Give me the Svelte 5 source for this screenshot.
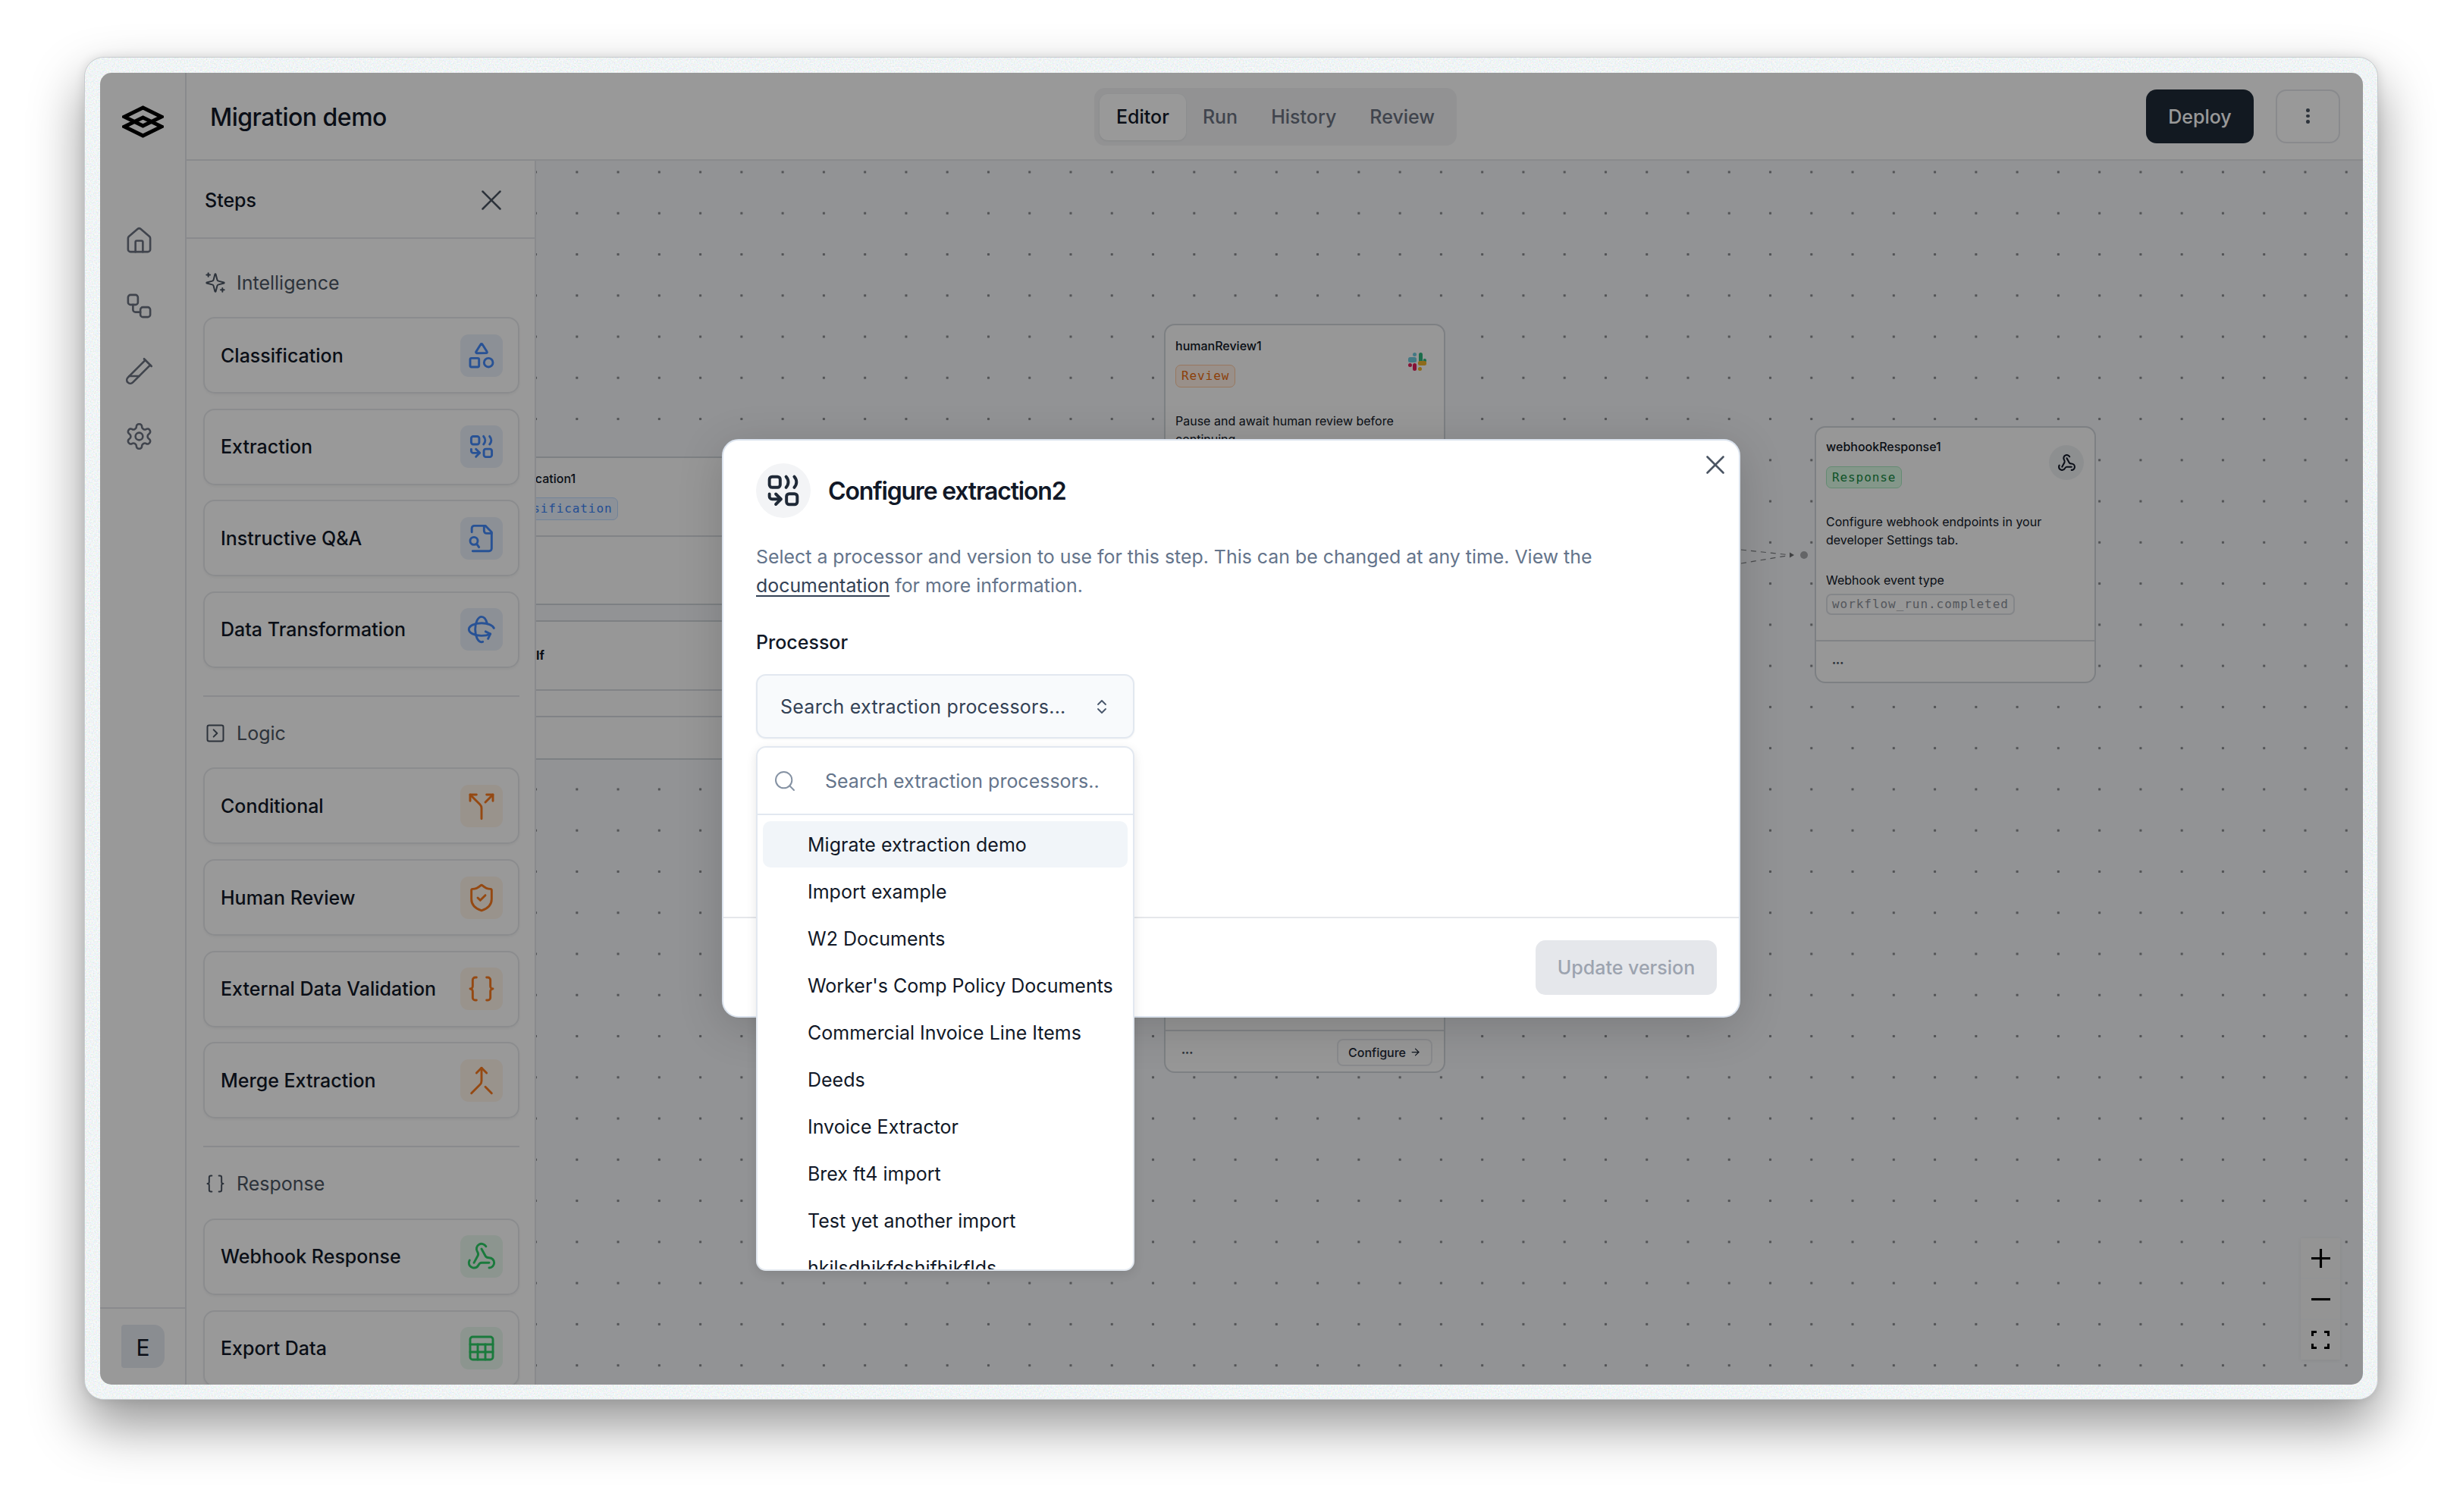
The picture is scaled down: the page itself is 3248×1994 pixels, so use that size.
<script>
  const blue = 'blue', orange = 'orange', green = 'green';

  // lucide-style icon bodies, all on a 24 box
  const icons = {
    shapes: `<path d="M8.3 10a.7.7 0 0 1-.626-1.079L11.4 3a.7.7 0 0 1 1.198-.043L16.3 8.9a.7.7 0 0 1-.572 1.1Z"/><rect x="3" y="14" width="7" height="7" rx="1"/><circle cx="17.5" cy="17.5" r="3.5"/>`,
    extract: `<rect x="3.85" y="3.85" width="6.3" height="6.3" rx="1.6"/><path d="M13.6 3.85c.9 1 1.3 2 1.3 3.15s-.4 2.15-1.3 3.15"/><path d="M18.4 3.85c.9 1 1.3 2 1.3 3.15s-.4 2.15-1.3 3.15"/><path d="M3.85 14v1.4a1.6 1.6 0 0 0 1.6 1.6h5"/><path d="m7.6 14 3 3-3 3"/><rect x="13.85" y="13.85" width="6.3" height="6.3" rx="1.6"/>`,
    fileSearch: `<path d="M14 2v4a2 2 0 0 0 2 2h4"/><path d="M4.3 7V4a2 2 0 0 1 2-2H15l5 5v13a2 2 0 0 1-2 2H5"/><circle cx="6" cy="14" r="3"/><path d="m10 19-1.8-2.6"/>`,
    rotate: `<path d="M16.466 7.5C15.643 4.237 13.952 2 12 2 9.239 2 7 6.477 7 12s2.239 10 5 10c.342 0 .677-.069 1-.2"/><path d="m15.194 13.707 3.814 1.86-1.86 3.814"/><path d="M19 15.57c-1.804.885-4.274 1.43-7 1.43-5.523 0-10-2.239-10-5s4.477-5 10-5c4.838 0 8.873 1.718 9.8 4"/>`,
    split: `<path d="M16 3h5v5"/><path d="M8 3H3v5"/><path d="M12 22v-8.3a4 4 0 0 0-1.172-2.872L3 3"/><path d="m15 9 6-6"/>`,
    shield: `<path d="M20 13c0 5-3.5 7.5-7.66 8.95a1 1 0 0 1-.67-.01C7.5 20.5 4 18 4 13V6a1 1 0 0 1 1-1c2 0 4.5-1.2 6.24-2.72a1.17 1.17 0 0 1 1.52 0C14.51 3.81 17 5 19 5a1 1 0 0 1 1 1z"/><path d="m9 12 2 2 4-4"/>`,
    braces: `<path d="M8 3H7a2 2 0 0 0-2 2v5a2 2 0 0 1-2 2 2 2 0 0 1 2 2v5c0 1.1.9 2 2 2h1"/><path d="M16 21h1a2 2 0 0 0 2-2v-5c0-1.1.9-2 2-2a2 2 0 0 1-2-2V5a2 2 0 0 0-2-2h-1"/>`,
    merge: `<path d="m8 6 4-4 4 4"/><path d="M12 2v10.3a4 4 0 0 1-1.172 2.872L4 22"/><path d="m20 22-5-5"/>`,
    webhook: `<path d="M18 16.98h-5.99c-1.1 0-1.95.94-2.48 1.9A4 4 0 0 1 2 17c.01-.7.2-1.4.57-2"/><path d="m6 17 3.13-5.78c.53-.97.1-2.18-.5-3.1a4 4 0 1 1 6.89-4.06"/><path d="m12 6 3.13 5.73C15.66 12.7 16.9 13 18 13a4 4 0 0 1 0 8"/>`,
    table: `<rect x="3" y="3" width="18" height="18" rx="2"/><path d="M3 9h18"/><path d="M3 15h18"/><path d="M9 9v12"/><path d="M15 9v12"/>`,
    home: `<path d="M3 10a2 2 0 0 1 .709-1.528l7-5.999a2 2 0 0 1 2.582 0l7 5.999A2 2 0 0 1 21 10v9a2 2 0 0 1-2 2H5a2 2 0 0 1-2-2z"/><path d="M15 21v-8a1 1 0 0 0-1-1h-4a1 1 0 0 0-1 1v8"/>`,
    flow: `<rect x="3" y="3" width="8" height="8" rx="2"/><path d="M7 11v4a2 2 0 0 0 2 2h4"/><rect x="13" y="13" width="8" height="8" rx="2"/>`,
    tube: `<path d="M21 7 6.82 21.18a2.83 2.83 0 0 1-3.99-.01a2.83 2.83 0 0 1 0-4L17 3"/><path d="m16 2 6 6"/><path d="M12 16H4"/>`,
    gear: `<path d="M12.22 2h-.44a2 2 0 0 0-2 2v.18a2 2 0 0 1-1 1.73l-.43.25a2 2 0 0 1-2 0l-.15-.08a2 2 0 0 0-2.73.73l-.22.38a2 2 0 0 0 .73 2.73l.15.1a2 2 0 0 1 1 1.72v.51a2 2 0 0 1-1 1.74l-.15.09a2 2 0 0 0-.73 2.73l.22.38a2 2 0 0 0 2.73.73l.15-.08a2 2 0 0 1 2 0l.43.25a2 2 0 0 1 1 1.73V20a2 2 0 0 0 2 2h.44a2 2 0 0 0 2-2v-.18a2 2 0 0 1 1-1.73l.43-.25a2 2 0 0 1 2 0l.15.08a2 2 0 0 0 2.73-.73l.22-.39a2 2 0 0 0-.73-2.73l-.15-.08a2 2 0 0 1-1-1.74v-.5a2 2 0 0 1 1-1.74l.15-.09a2 2 0 0 0 .73-2.73l-.22-.38a2 2 0 0 0-2.73-.73l-.15.08a2 2 0 0 1-2 0l-.43-.25a2 2 0 0 1-1-1.73V4a2 2 0 0 0-2-2z"/><circle cx="12" cy="12" r="3"/>`,
    sparkles: `<path d="M9.937 15.5A2 2 0 0 0 8.5 14.063l-6.135-1.582a.5.5 0 0 1 0-.962L8.5 9.936A2 2 0 0 0 9.937 8.5l1.582-6.135a.5.5 0 0 1 .963 0L14.063 8.5A2 2 0 0 0 15.5 9.937l6.135 1.581a.5.5 0 0 1 0 .964L15.5 14.063a2 2 0 0 0-1.437 1.437l-1.582 6.135a.5.5 0 0 1-.963 0z"/><path d="M4 1v4"/><path d="M2 3h4"/><path d="M20 18v4"/><path d="M18 20h4"/>`,
    logic: `<rect x="3" y="3" width="18" height="18" rx="2"/><path d="m10 8 4 4-4 4"/>`,
    close: `<path d="M18 6 6 18"/><path d="m6 6 12 12"/>`,
    search: `<circle cx="11" cy="11" r="8"/><path d="m21 21-4.3-4.3"/>`,
    chevrons: `<path d="m7 15 5 5 5-5"/><path d="m7 9 5-5 5 5"/>`
  };

  const sections = [
    { title: 'Intelligence', icon: 'sparkles', steps: [
      { name: 'Classification', icon: 'shapes', tone: blue },
      { name: 'Extraction', icon: 'extract', tone: blue },
      { name: 'Instructive Q&A', icon: 'fileSearch', tone: blue },
      { name: 'Data Transformation', icon: 'rotate', tone: blue }
    ]},
    { title: 'Logic', icon: 'logic', steps: [
      { name: 'Conditional', icon: 'split', tone: orange },
      { name: 'Human Review', icon: 'shield', tone: orange },
      { name: 'External Data Validation', icon: 'braces', tone: orange },
      { name: 'Merge Extraction', icon: 'merge', tone: orange }
    ]},
    { title: 'Response', icon: 'braces', steps: [
      { name: 'Webhook Response', icon: 'webhook', tone: green },
      { name: 'Export Data', icon: 'table', tone: green }
    ]}
  ];

  const railIcons = ['home', 'flow', 'tube', 'gear'];
  const tabs = ['Editor', 'Run', 'History', 'Review'];
  const processors = [
    'Migrate extraction demo', 'Import example', 'W2 Documents', "Worker's Comp Policy Documents",
    'Commercial Invoice Line Items', 'Deeds', 'Invoice Extractor', 'Brex ft4 import',
    'Test yet another import', 'hkjlsdhjkfdshjfhjkflds'
  ];
</script>

{#snippet icon(name, cls = '')}
  <svg class="ico {cls}" viewBox="0 0 24 24" fill="none" stroke="currentColor" stroke-linecap="round" stroke-linejoin="round">{@html icons[name]}</svg>
{/snippet}

<div class="page">
  <div class="frame">
    <!-- speckled glass border round the window -->
    <svg class="grain" aria-hidden="true">
      <filter id="speckle">
        <feTurbulence type="fractalNoise" baseFrequency="0.55" numOctaves="2" seed="4" />
        <feColorMatrix type="matrix" values="0.5 0 0 0 0.62  0 0.35 0 0 0.73  0 0 0.45 0 0.69  0 0 0 0 1" />
      </filter>
      <rect width="100%" height="100%" filter="url(#speckle)" />
    </svg>

    <div class="window">
      <aside class="rail">
        <div class="logo">
          <svg viewBox="0 0 55 43" width="55" height="43" fill="none" stroke="#000" stroke-width="5">
            <path d="M27.5 3 52 15 27.5 27 3 15Z" />
            <path d="M27.5 16 52 28 27.5 40 3 28Z" />
          </svg>
        </div>
        <nav class="rail-nav">
          {#each railIcons as r}
            {@render icon(r, 'rail-ico')}
          {/each}
        </nav>
        <div class="rail-foot"><span class="avatar">E</span></div>
      </aside>

      <div class="main">
        <header class="top">
          <h1>Migration demo</h1>
          <div class="tabs">
            {#each tabs as t, i}
              <span class="tab" class:active={i === 0}>{t}</span>
            {/each}
          </div>
          <div class="actions">
            <button class="deploy">Deploy</button>
            <button class="more" aria-label="More"><i></i><i></i><i></i></button>
          </div>
        </header>

        <div class="body">
          <section class="panel">
            <div class="panel-head">
              <span>Steps</span>
              {@render icon('close', 'panel-x')}
            </div>
            <div class="panel-scroll">
              {#each sections as s}
                <div class="group">
                  <div class="group-title">{@render icon(s.icon, 'group-ico')}<span>{s.title}</span></div>
                  <div class="cards">
                    {#each s.steps as st}
                      <div class="card">
                        <span>{st.name}</span>
                        <span class="tile {st.tone}">{@render icon(st.icon, 'tile-ico')}</span>
                      </div>
                    {/each}
                  </div>
                </div>
              {/each}
            </div>
          </section>

          <section class="canvas">
            <div class="node n-class">
              <div class="n-title">classification1</div>
              <span class="badge b-blue">Classification</span>
              <div class="n-rule r1"></div>
            </div>
            <div class="node n-if">
              <div class="n-rule r2"></div>
              <div class="n-rule r3"></div>
              <b class="if-label">If</b>
            </div>

            <div class="node n-human">
              <div class="n-title">humanReview1</div>
              <span class="badge b-orange">Review</span>
              <svg class="slack" viewBox="0 0 24 24">
                <rect x="14" y="0" width="5" height="13" rx="2.5" fill="#2eb67d" />
                <rect x="19.6" y="8" width="4.4" height="5" rx="2.2" fill="#2eb67d" />
                <rect x="0" y="6" width="11" height="7" rx="2.5" fill="#6ecadc" />
                <rect x="6" y="0" width="5" height="5" rx="2.5" fill="#6ecadc" />
                <rect x="6" y="14" width="5" height="10" rx="2.5" fill="#e01e5a" />
                <rect x="0" y="14" width="5" height="5" rx="2.5" fill="#e01e5a" />
                <rect x="13" y="11" width="11" height="6" rx="2.5" fill="#ecb22e" />
                <rect x="13" y="19" width="5" height="5" rx="2.5" fill="#ecb22e" />
              </svg>
              <p class="n-text">Pause and await human review before continuing.</p>
              <div class="n-foot">
                <span class="dots">•••</span>
                <span class="configure">Configure <svg viewBox="0 0 24 24" width="15" height="15" fill="none" stroke="currentColor" stroke-width="2" stroke-linecap="round" stroke-linejoin="round"><path d="M5 12h14" /><path d="m12 5 7 7-7 7" /></svg></span>
              </div>
            </div>

            <svg class="wires" viewBox="0 0 100 40" width="100" height="40" fill="none" stroke="#7b7d80" stroke-width="1.2" stroke-dasharray="7 6">
              <path d="M0 6 66 13" />
              <path d="M0 24 66 13" />
              <path d="M64 9.5 70 13 64 16.5Z" fill="#6b6d70" stroke="none" />
              <circle cx="83" cy="13" r="5" fill="#a7a8ac" stroke="none" />
            </svg>

            <div class="node n-hook">
              <div class="n-title">webhookResponse1</div>
              <span class="badge b-green">Response</span>
              <span class="hook-circle">{@render icon('webhook', 'hook-ico')}</span>
              <p class="n-text">Configure webhook endpoints in your developer Settings tab.</p>
              <div class="n-label">Webhook event type</div>
              <span class="code">workflow_run.completed</span>
              <div class="n-foot"><span class="dots">•••</span></div>
            </div>

            <div class="zoom-ctl">
              <button aria-label="Zoom in"><svg viewBox="0 0 24 24" width="25" height="25" fill="none" stroke="#000" stroke-width="3"><path d="M12 0v24M0 12h24" /></svg></button>
              <button aria-label="Zoom out"><svg viewBox="0 0 24 24" width="25" height="25" fill="none" stroke="#000" stroke-width="3"><path d="M0 12h24" /></svg></button>
              <button aria-label="Fit view"><svg viewBox="0 0 24 24" width="24" height="24" fill="none" stroke="#000" stroke-width="3"><path d="M7 1.5H1.5V7M17 1.5h5.5V7M7 22.5H1.5V17M17 22.5h5.5V17" /></svg></button>
            </div>
          </section>
        </div>
      </div>

      <div class="scrim"></div>

      <div class="modal">
        <button class="modal-x" aria-label="Close">{@render icon('close', 'modal-x-ico')}</button>
        <div class="modal-main">
          <div class="modal-head">
            <span class="modal-badge">{@render icon('extract', 'modal-ico')}</span>
            <h2>Configure extraction2</h2>
          </div>
          <p class="lead">Select a processor and version to use for this step. This can be changed at any time. View the <a href="#docs">documentation</a> for more information.</p>
          <div class="field-label">Processor</div>
          <div class="select">
            <span>Search extraction processors...</span>
            {@render icon('chevrons', 'select-ico')}
          </div>
        </div>
        <div class="modal-foot"><button class="update">Update version</button></div>

        <div class="dropdown">
          <div class="dd-search">
            {@render icon('search', 'dd-ico')}
            <span>Search extraction processors..</span>
          </div>
          <ul>
            {#each processors as p, i}
              <li class:hl={i === 0}>{p}</li>
            {/each}
          </ul>
        </div>
      </div>
    </div>
  </div>
</div>

<style>
  :global(body) {
    margin: 0;
    background: #fff;
    font-family: Inter, 'Noto Sans', sans-serif;
    color: #111827;
  }
  * { box-sizing: border-box; }
  button { font-family: inherit; padding: 0; border: 0; background: none; }
  .ico { display: block; stroke-width: 2; flex-shrink: 0; }

  .page {
    width: 3248px;
    height: 1994px;
    padding: 75px 112px 148px 111px;
    overflow: hidden;
  }
  .frame {
    position: relative;
    height: 100%;
    padding: 20px 19px 19px 20px;
    border-radius: 26px;
    border: 1px solid #c8cccf;
    box-shadow: 0 34px 70px rgba(0, 0, 0, 0.42), 0 0 14px rgba(0, 0, 0, 0.1);
    background: #dfe9ea;
  }
  .grain {
    position: absolute;
    inset: 0;
    width: 100%;
    height: 100%;
    border-radius: 25px;
  }
  .window {
    position: relative;
    display: flex;
    height: 100%;
    border-radius: 15px;
    overflow: hidden;
    background: #fff;
  }

  /* left rail */
  .rail {
    width: 114px;
    flex-shrink: 0;
    display: flex;
    flex-direction: column;
    border-right: 2px solid #e5e7eb;
  }
  .logo { height: 116px; display: flex; align-items: center; padding: 12px 0 0 29px; }
  .rail-nav {
    flex: 1;
    display: flex;
    flex-direction: column;
    gap: 47px;
    padding: 86px 0 0 32px;
    color: #6b7280;
  }
  :global(.rail-ico) { width: 39px; height: 39px; stroke-width: 1.6 !important; }
  .rail-foot {
    height: 102px;
    border-top: 2px solid #e5e7eb;
    padding: 21px 0 0 28px;
  }
  .avatar {
    display: flex;
    align-items: center;
    justify-content: center;
    width: 57px;
    height: 57px;
    padding-top: 2px;
    border-radius: 4px 14px 14px 4px;
    background: #e7ebf2;
    font-size: 30px;
  }

  .main { flex: 1; min-width: 0; display: flex; flex-direction: column; }

  /* header */
  .top {
    position: relative;
    height: 116px;
    flex-shrink: 0;
    display: flex;
    align-items: center;
    justify-content: space-between;
    padding: 0 30px 0 31px;
    border-bottom: 2px solid #e5e7eb;
  }
  h1 { margin: 0; padding-top: 3px; font-size: 32px; font-weight: 500; letter-spacing: -0.5px; color: #111827; }
  .tabs {
    position: absolute;
    left: 1197px;
    top: 20px;
    display: flex;
    align-items: center;
    height: 76px;
    width: 478px;
    padding: 0 7px;
    border-radius: 14px;
    background: #f3f4f6;
  }
  .tab { padding: 0 22px; font-size: 25px; font-weight: 500; color: #6b7280; line-height: 61px; }
  .tab.active { background: #fff; color: #111827; border-radius: 11px; box-shadow: 0 1px 3px rgba(0,0,0,.08); }
  .actions { display: flex; gap: 29px; align-items: center; }
  .deploy {
    width: 142px;
    height: 71px;
    padding-top: 1px;
    border-radius: 14px;
    background: #1e2a38;
    color: #fff;
    font-size: 25px;
    font-weight: 500;
  }
  .more {
    width: 85px;
    height: 71px;
    border: 2px solid #e5e7eb;
    border-radius: 14px;
    display: flex;
    flex-direction: column;
    align-items: center;
    justify-content: center;
    gap: 3px;
  }
  .more i { width: 4.6px; height: 4.6px; border-radius: 50%; background: #4b5563; }

  .body { flex: 1; min-height: 0; display: flex; }

  /* steps panel */
  .panel {
    width: 461px;
    flex-shrink: 0;
    display: flex;
    flex-direction: column;
    border-right: 2px solid #e5e7eb;
    overflow: hidden;
    background: #fff;
  }
  .panel-head {
    height: 103px;
    flex-shrink: 0;
    display: flex;
    align-items: center;
    justify-content: space-between;
    padding: 2px 34px 0 24px;
    border-bottom: 2px solid #e5e7eb;
    font-size: 25px;
    font-weight: 500;
  }
  :global(.panel-x) { width: 46px; height: 46px; color: #4b5563; stroke-width: 1.3 !important; }
  .panel-scroll { flex: 1; overflow: hidden; padding: 0 20px 0 22px; }
  .group { padding: 36px 0; border-bottom: 2px solid #e5e7eb; }
  .group + .group { padding-top: 26.5px; }
  .group:last-child { border-bottom: 0; }
  .group-title {
    height: 40px;
    margin-bottom: 27px;
    display: flex;
    align-items: center;
    gap: 14px;
    padding: 3px 0 0 2px;
    color: #4b5563;
    font-size: 25px;
  }
  :global(.group-ico) { width: 28px; height: 28px; stroke-width: 1.7 !important; }
  .cards { display: grid; gap: 19.67px; }
  .card {
    height: 101px;
    display: flex;
    align-items: center;
    justify-content: space-between;
    padding: 0 20px 0 21px;
    border: 2px solid #e8eaed;
    border-radius: 15px;
    box-shadow: 0 2px 3px rgba(0,0,0,.04);
    font-size: 25px;
    font-weight: 500;
    white-space: nowrap;
  }
  .tile {
    width: 56px;
    height: 56px;
    border-radius: 11px;
    display: flex;
    align-items: center;
    justify-content: center;
  }
  :global(.tile-ico) { width: 40px; height: 40px; stroke-width: 1.75 !important; }
  .tile.blue { background: #e9f0fa; color: #4489f8; }
  .tile.orange { background: #fff5ea; color: #f97a1e; }
  .tile.green { background: #e9f8ee; color: #2ccb65; }

  /* flow canvas */
  .canvas {
    position: relative;
    flex: 1;
    min-width: 0;
    overflow: hidden;
    background-color: #f3f5f8;
    background-image: radial-gradient(circle, #8a8c90 1.6px, transparent 2px);
    background-size: 54.28px 54.28px;
    background-position: -27.6px -12.2px;
  }
  .node {
    position: absolute;
    width: 371px;
    border: 2px solid #d1d5db;
    border-radius: 14px;
    background: #fcfcfc;
    font-size: 16px;
    padding: 0 13px;
  }
  .n-title { font-size: 16px; font-weight: 500; line-height: 20px; padding-top: 17px; }
  .badge {
    position: absolute;
    left: 13px;
    top: 52px;
    height: 30px;
    padding: 0 7px;
    border-radius: 7px;
    border: 1px solid;
    font-family: 'DejaVu Sans Mono', monospace;
    font-size: 16px;
    letter-spacing: 0.9px;
    line-height: 28px;
  }
  .b-blue { background: #eaf2fe; border-color: #bfdbfe; color: #3b82f6; }
  .b-orange { background: #fff1e6; border-color: #fdc79f; color: #ea6a10; }
  .b-green { background: #dcfce7; border-color: #a7e8bf; color: #178a44; }
  .n-text { position: absolute; left: 13px; right: 16px; margin: 0; font-size: 16px; line-height: 24px; }
  .n-rule { position: absolute; left: 0; right: 0; border-top: 2px solid #d8dbe0; }
  .n-foot {
    position: absolute;
    left: 0;
    right: 0;
    bottom: -2px;
    height: 57px;
    display: flex;
    align-items: center;
    justify-content: space-between;
    padding: 0 15px 0 21px;
    border-top: 2px solid #d8dbe0;
  }
  .dots { font-size: 9px; color: #4b5563; }

  .n-class { left: -70px; top: 390px; height: 196px; }
  .r1 { top: 102px; }
  .n-if { left: -70px; top: 606px; height: 184px; }
  .r2 { top: 89px; }
  .r3 { top: 124px; }
  .if-label { position: absolute; left: 68px; top: 34px; font-size: 16px; line-height: 20px; font-weight: 700; }

  .n-human { left: 828px; top: 215px; height: 988px; }
  .slack { position: absolute; right: 23px; top: 36px; width: 24px; height: 24px; }
  .n-human .n-text { top: 114px; }
  .configure {
    display: flex;
    align-items: center;
    gap: 5px;
    height: 36px;
    padding: 0 13px;
    border: 2px solid #e5e7eb;
    border-radius: 8px;
    font-size: 16px;
    font-weight: 500;
    color: #1f2937;
  }

  .n-hook { left: 1686px; top: 350px; height: 339px; }
  .n-hook .n-title { padding-top: 15px; }
  .n-hook .badge { top: 51px; height: 29px; }
  .hook-circle {
    position: absolute;
    right: 14px;
    top: 23px;
    width: 46px;
    height: 46px;
    border-radius: 50%;
    background: #eceef1;
    display: flex;
    align-items: center;
    justify-content: center;
  }
  :global(.hook-ico) { width: 25px; height: 25px; }
  .n-hook .n-text { top: 112px; }
  .n-label { position: absolute; left: 13px; top: 189px; font-size: 16px; line-height: 24px; }
  .code {
    position: absolute;
    left: 13px;
    top: 219px;
    height: 28px;
    padding: 0 6px;
    border: 2px solid #dcdfe4;
    border-radius: 7px;
    font-family: 'DejaVu Sans Mono', monospace;
    font-size: 16px;
    letter-spacing: 0.95px;
    line-height: 24px;
    color: #8c919a;
  }

  .wires { position: absolute; left: 1589px; top: 507px; }

  .zoom-ctl {
    position: absolute;
    right: 30px;
    bottom: 33px;
    display: flex;
    flex-direction: column;
    gap: 2px;
    box-shadow: 0 1px 5px rgba(0,0,0,.06);
  }
  .zoom-ctl button {
    width: 52px;
    height: 52px;
    background: #f7f7f7;
    display: flex;
    align-items: center;
    justify-content: center;
  }

  /* dialog layer */
  .scrim { position: absolute; inset: 0; background: rgba(0, 0, 0, 0.4); }
  .modal {
    position: absolute;
    left: 820px;
    top: 483px;
    width: 1343px;
    height: 763px;
    display: flex;
    flex-direction: column;
    background: #fff;
    border: 2px solid #dbe3ee;
    border-radius: 22px;
    box-shadow: 0 12px 60px rgba(0, 0, 0, 0.16);
  }
  .modal-x { position: absolute; right: 10px; top: 11px; color: #4b5563; }
  :global(.modal-x-ico) { width: 42px; height: 42px; stroke-width: 1.5 !important; }
  .modal-main { flex: 1; padding: 30px 43px 0; }
  .modal-head { display: flex; align-items: center; gap: 23px; height: 72px; }
  .modal-badge {
    width: 72px;
    height: 72px;
    border-radius: 50%;
    background: #f3f4f6;
    display: flex;
    align-items: center;
    justify-content: center;
  }
  :global(.modal-ico) { width: 54px; height: 54px; color: #1f2937; stroke-width: 1.75 !important; }
  h2 { margin: 0; font-size: 32px; font-weight: 600; letter-spacing: -1.2px; color: #111827; }
  .lead {
    margin: 32px 0 0;
    width: 1240px;
    font-size: 24.9px;
    line-height: 38px;
    color: #64748b;
  }
  .lead a { color: #334155; text-decoration: underline; text-underline-offset: 4px; }
  .field-label { margin-top: 37px; font-size: 25px; line-height: 38px; font-weight: 500; color: #111827; }
  .select {
    margin-top: 23px;
    width: 499px;
    height: 85px;
    display: flex;
    align-items: center;
    justify-content: space-between;
    padding: 0 29px 0 30px;
    background: #f8fafc;
    border: 2px solid #e2e8f0;
    border-radius: 13px;
    box-shadow: 0 1px 3px rgba(0,0,0,.05);
    font-size: 25px;
    letter-spacing: 0.25px;
    color: #334155;
    white-space: nowrap;
  }
  :global(.select-ico) { width: 24px; height: 24px; color: #475569; stroke-width: 1.8 !important; }
  .modal-foot {
    height: 131px;
    flex-shrink: 0;
    border-top: 2px solid #e5e7eb;
    display: flex;
    align-items: center;
    justify-content: flex-end;
    padding: 0 29px 0 0;
  }
  .update {
    width: 239px;
    height: 72px;
    background: #e5e7eb;
    color: #9ca3af;
    border-radius: 13px;
    font-size: 25px;
    font-weight: 500;
  }
  .dropdown {
    position: absolute;
    left: 43px;
    top: 403px;
    width: 499px;
    height: 692px;
    background: #fff;
    border: 2px solid #e2e8f0;
    border-radius: 13px;
    box-shadow: 0 4px 14px rgba(0, 0, 0, 0.1);
    overflow: hidden;
  }
  .dd-search {
    height: 89px;
    display: flex;
    align-items: center;
    gap: 37px;
    padding: 0 0 0 20px;
    border-bottom: 2px solid #e2e8f0;
    font-size: 25px;
    color: #64748b;
    white-space: nowrap;
  }
  :global(.dd-ico) { width: 32px; height: 32px; stroke-width: 1.5 !important; color: #8592a3; }
  ul { list-style: none; margin: 0; padding: 8px 7px 0; }
  li {
    height: 61px;
    margin-bottom: 1px;
    padding-left: 59px;
    display: flex;
    align-items: center;
    font-size: 25px;
    color: #111827;
    white-space: nowrap;
    border-radius: 10px;
  }
  li.hl { background: #f1f5f9; }
</style>
